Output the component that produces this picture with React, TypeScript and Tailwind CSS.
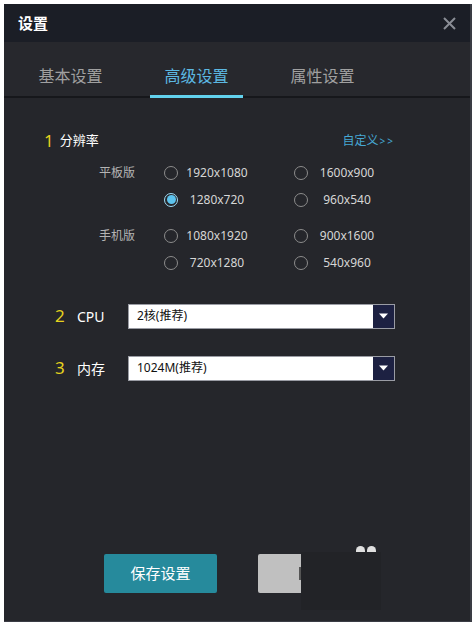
import React, { useState } from 'react';

const font = { fontFamily: '"Noto Sans", "Noto Sans CJK SC", sans-serif' };

interface ResOption {
  value: string;
}

const tabletRes: ResOption[][] = [
  [{ value: '1920x1080' }, { value: '1600x900' }],
  [{ value: '1280x720' }, { value: '960x540' }],
];

const phoneRes: ResOption[][] = [
  [{ value: '1080x1920' }, { value: '900x1600' }],
  [{ value: '720x1280' }, { value: '540x960' }],
];

const Radio: React.FC<{ checked: boolean }> = ({ checked }) => (
  <span
    className={`flex h-[14px] w-[14px] items-center justify-center rounded-full border-[1.5px] ${
      checked ? 'border-[#9fdcf5]' : 'border-[#8c8c8c]'
    }`}
  >
    {checked && <span className="h-[9px] w-[9px] rounded-full bg-[#5cc3ee]" />}
  </span>
);

const ResGroup: React.FC<{
  label: string;
  rows: ResOption[][];
  selected: string;
  onSelect: (v: string) => void;
}> = ({ label, rows, selected, onSelect }) => (
  <div className="flex flex-col">
    {rows.map((row, i) => (
      <div key={i} className="flex h-[27px] items-center">
        <div className="w-[132px] pr-[1px] text-right text-[12px] text-[#b4b4b4]">{i === 0 ? label : ''}</div>
        {row.map((opt, j) => (
          <button
            key={opt.value}
            onClick={() => onSelect(opt.value)}
            className={`flex items-center ${j === 0 ? 'ml-[28px] w-[130px]' : 'w-[120px]'}`}
          >
            <Radio checked={selected === opt.value} />
            <span className="ml-[6px] w-[66px] text-center text-[12px] text-[#d6d6d6]">{opt.value}</span>
          </button>
        ))}
      </div>
    ))}
  </div>
);

const SelectRow: React.FC<{ num: string; label: string; value: string }> = ({ num, label, value }) => (
  <div className="flex h-[24px] items-center">
    <span className="ml-[51px] w-[22px] text-[17px] text-[#e6d21e]">{num}</span>
    <span className="w-[51px] text-[14px] text-white">{label}</span>
    <div className="flex h-[25px] w-[267px] items-stretch border border-[#9a9ca4] bg-white">
      <span className="flex flex-1 items-center pl-[8px] text-[12px] text-[#111]">{value}</span>
      <span className="flex w-[21px] items-center justify-center bg-[#1d2142]">
        <svg width="9" height="6" viewBox="0 0 9 6">
          <path d="M0 0.5 L9 0.5 L4.5 5.5 Z" fill="#ffffff" />
        </svg>
      </span>
    </div>
  </div>
);

const App: React.FC = () => {
  const [tab, setTab] = useState<number>(1);
  const [res, setRes] = useState<string>('1280x720');
  const tabs = ['基本设置', '高级设置', '属性设置'];

  return (
    <div className="h-[629px] w-[475px] bg-white pl-[4px] pt-[4px]" style={font}>
      <div className="flex h-[618px] w-[468px] flex-col border-r-[2px] border-b-[1px] border-[#3a3c44] bg-[#25262b]">
        {/* Title bar */}
        <div className="flex h-[38px] items-center justify-between bg-[#1b1e26] pl-[14px] pr-[14px]">
          <span className="text-[15px] font-bold text-white">设置</span>
          <svg width="13" height="13" viewBox="0 0 13 13">
            <path d="M1 1 L12 12 M12 1 L1 12" stroke="#8a8d95" strokeWidth="2" />
          </svg>
        </div>

        {/* Tabs */}
        <div className="flex h-[56px] items-stretch gap-[33px] border-b-[2px] border-[#16171b] bg-[#27282d] pl-[20px]">
          {tabs.map((t, i) => (
            <button
              key={t}
              onClick={() => setTab(i)}
              className={`relative flex w-[93px] items-center justify-center pt-[14px] text-[16px] ${
                tab === i ? 'text-[#5cb8e2]' : 'text-[#a0a0a0]'
              }`}
            >
              {t}
              {tab === i && <span className="absolute bottom-[-2px] left-[0px] h-[3px] w-[93px] bg-[#62d2ee]" />}
            </button>
          ))}
        </div>

        {/* Body */}
        <div className="flex flex-1 flex-col">
          <div className="mt-[34px] flex h-[18px] items-center">
            <span className="ml-[40px] text-[17px] text-[#e6d21e]">1</span>
            <span className="ml-[6px] text-[13px] text-white">分辨率</span>
            <span className="ml-auto mr-[75px] text-[12px] text-[#46a8d4]">
              自定义<span className="ml-[1px] text-[10px] tracking-[2px]">&gt;&gt;</span>
            </span>
          </div>

          <div className="mt-[9px]">
            <ResGroup label="平板版" rows={tabletRes} selected={res} onSelect={setRes} />
          </div>
          <div className="mt-[9px]">
            <ResGroup label="手机版" rows={phoneRes} selected={res} onSelect={setRes} />
          </div>

          <div className="mt-[28px]">
            <SelectRow num="2" label="CPU" value="2核(推荐)" />
          </div>
          <div className="mt-[28px]">
            <SelectRow num="3" label="内存" value="1024M(推荐)" />
          </div>

          {/* Footer buttons */}
          <div className="mt-auto mb-[11px] flex items-start">
            <button className="ml-[100px] flex h-[39px] w-[113px] items-center justify-center rounded-[2px] bg-[#268a9c] text-[15px] text-white">
              保存设置
            </button>
            <div className="relative ml-[41px] h-[39px] w-[43px] rounded-l-[2px] bg-[#c0c0c0]">
              <span className="absolute right-0 top-[13px] h-[13px] w-[2px] bg-[#555]" />
            </div>
            <div className="relative mt-[-2px] h-[58px] w-[80px] bg-[#222327]">
              <span className="absolute left-[55px] top-[-6px] flex gap-[2px]">
                <span className="h-[6px] w-[9px] rounded-t-full bg-[#e0e0e0]" />
                <span className="h-[6px] w-[9px] rounded-t-full bg-[#e0e0e0]" />
              </span>
            </div>
          </div>
        </div>
      </div>
    </div>
  );
};

export default App;
